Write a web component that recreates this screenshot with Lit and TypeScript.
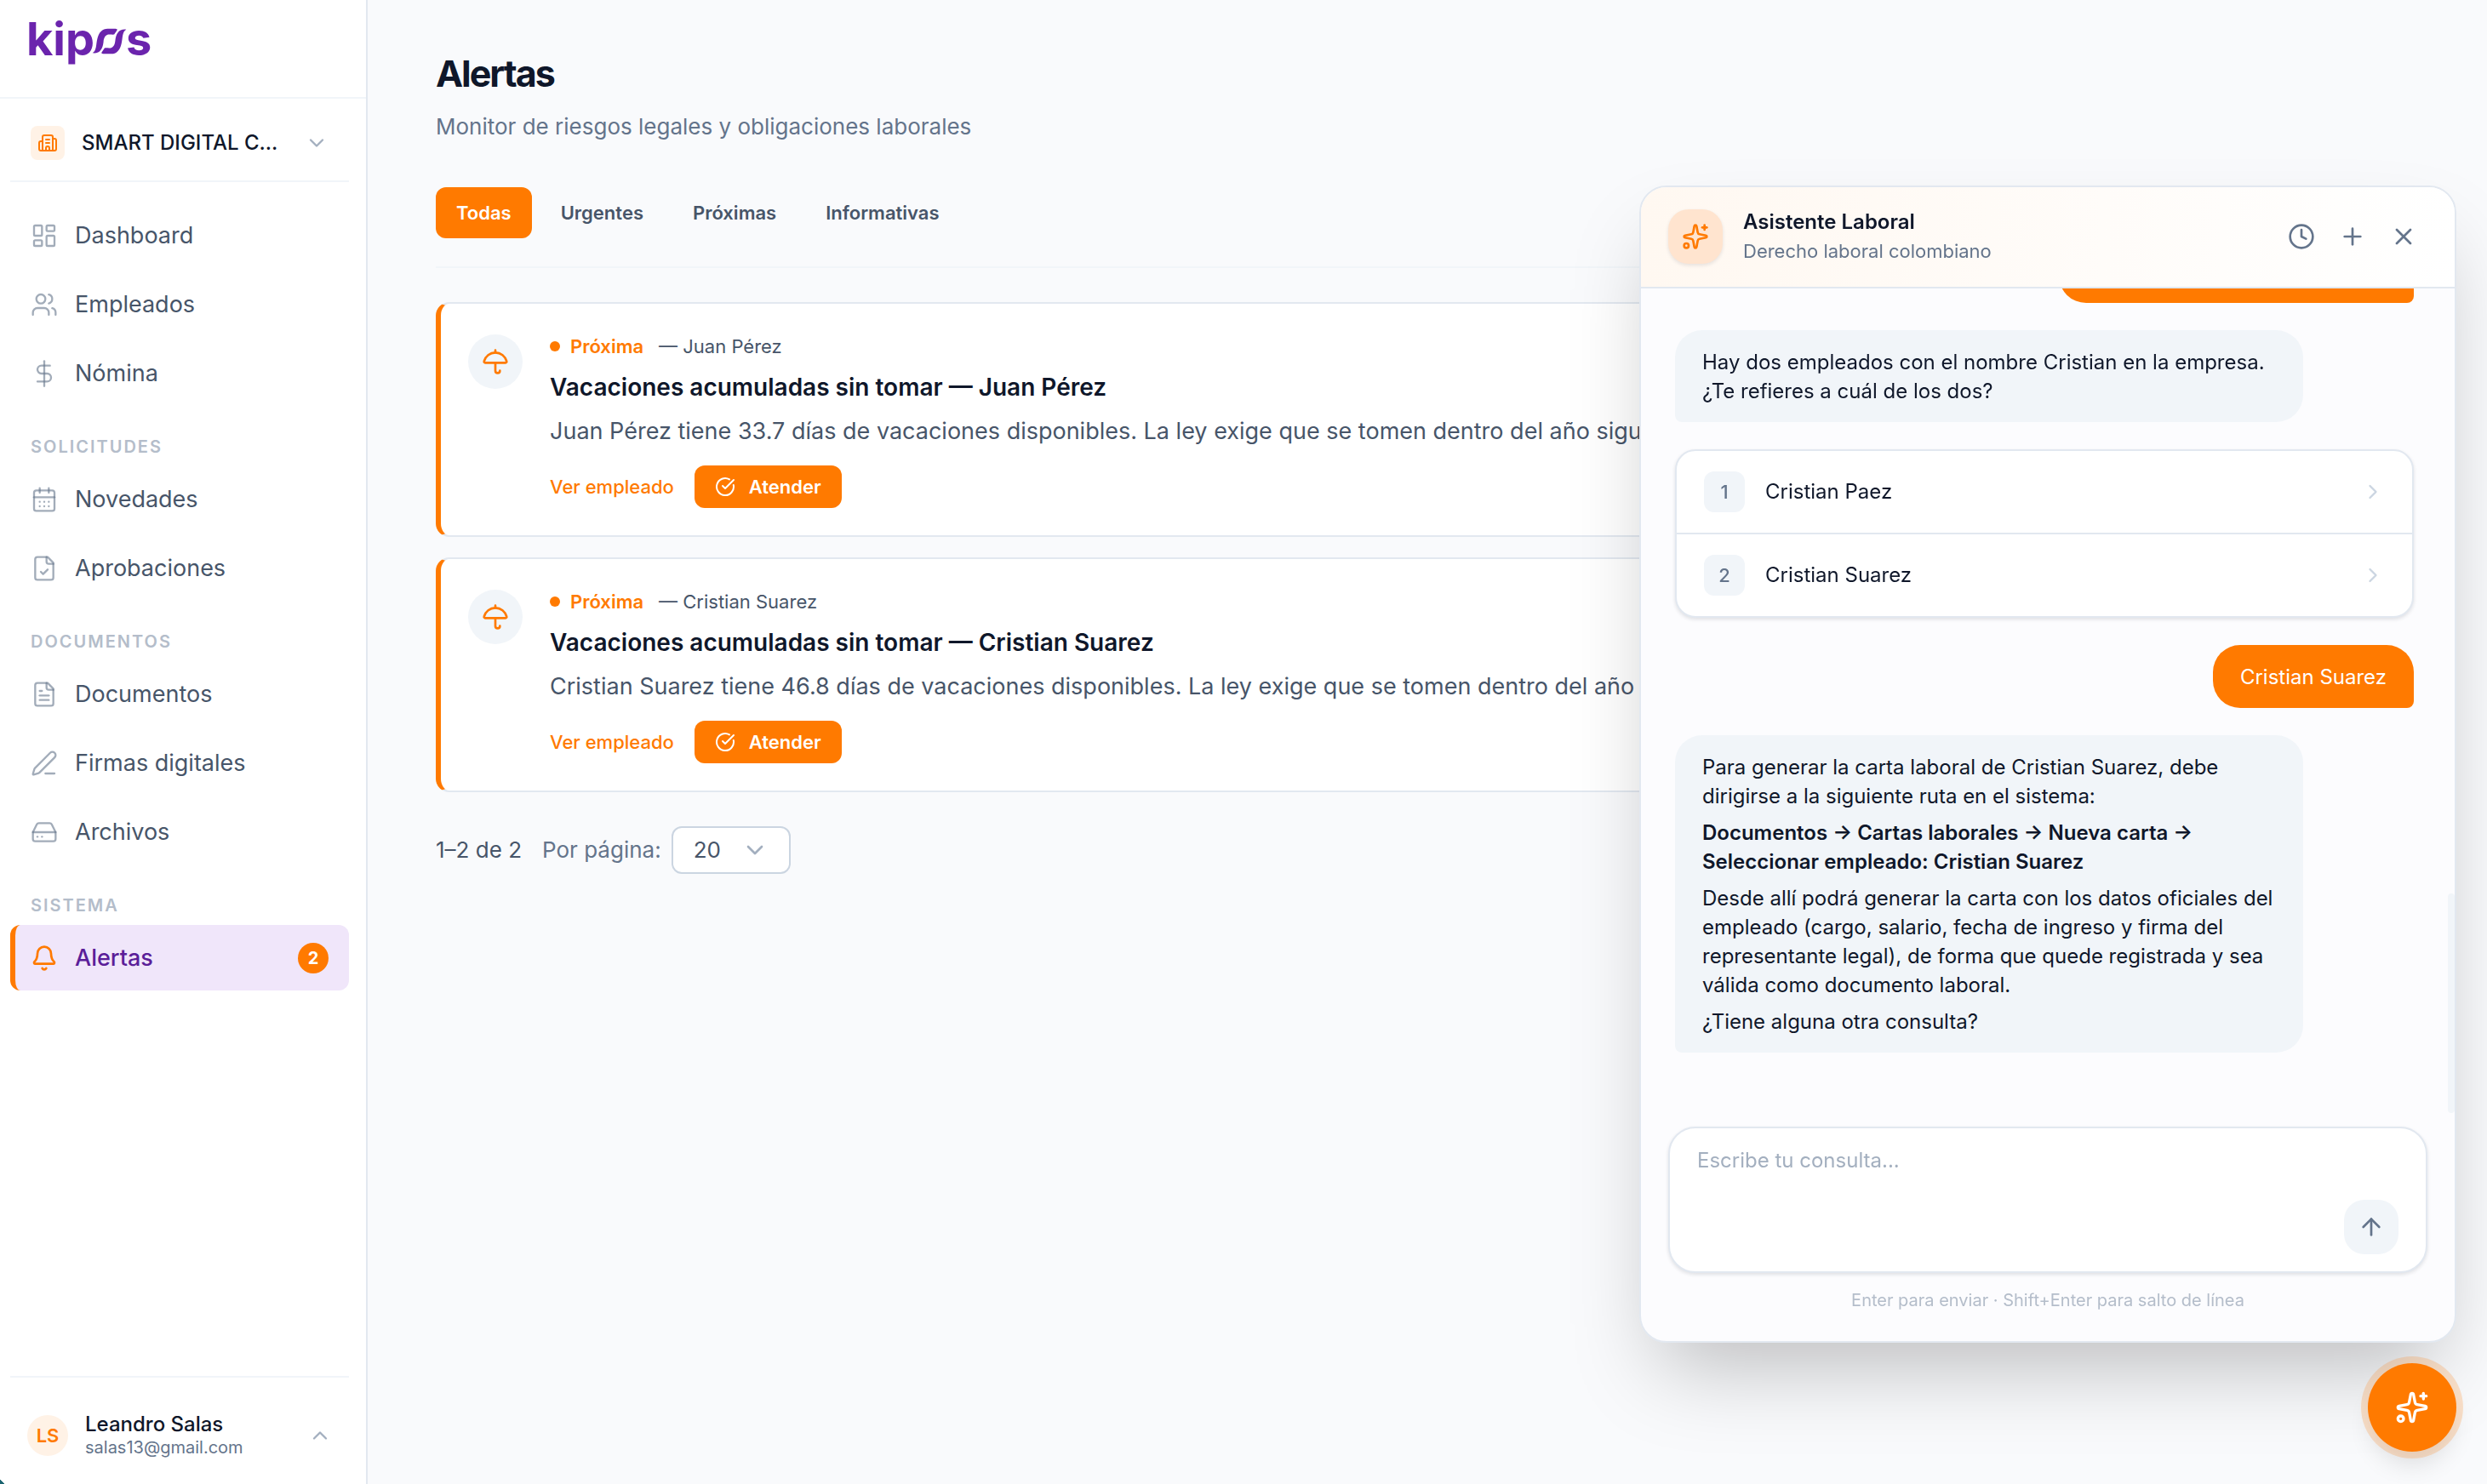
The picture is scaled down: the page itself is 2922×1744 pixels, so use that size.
import { LitElement, html, svg, css, nothing } from "lit";
import { customElement, property, state } from "lit/decorators.js";
import { classMap } from "lit/directives/class-map.js";

const ICONS: Record<string, unknown> = {
  dashboard: svg`<rect x="3" y="3" width="7" height="9" rx="1"/><rect x="14" y="3" width="7" height="5" rx="1"/><rect x="14" y="12" width="7" height="9" rx="1"/><rect x="3" y="16" width="7" height="5" rx="1"/>`,
  users: svg`<path d="M16 21v-2a4 4 0 0 0-4-4H6a4 4 0 0 0-4 4v2"/><circle cx="9" cy="7" r="4"/><path d="M22 21v-2a4 4 0 0 0-3-3.87"/><path d="M16 3.13a4 4 0 0 1 0 7.75"/>`,
  dollar: svg`<path d="M12 1v22"/><path d="M17 5H9.5a3.5 3.5 0 0 0 0 7h5a3.5 3.5 0 0 1 0 7H6"/>`,
  calendar: svg`<path d="M8 2v4"/><path d="M16 2v4"/><rect x="3" y="4" width="18" height="18" rx="2"/><path d="M3 10h18"/><path d="M8 14h.01"/><path d="M12 14h.01"/><path d="M16 14h.01"/><path d="M8 18h.01"/><path d="M12 18h.01"/><path d="M16 18h.01"/>`,
  fileCheck: svg`<path d="M15 2H6a2 2 0 0 0-2 2v16a2 2 0 0 0 2 2h12a2 2 0 0 0 2-2V7Z"/><path d="M14 2v4a2 2 0 0 0 2 2h4"/><path d="m9 15 2 2 4-4"/>`,
  fileText: svg`<path d="M15 2H6a2 2 0 0 0-2 2v16a2 2 0 0 0 2 2h12a2 2 0 0 0 2-2V7Z"/><path d="M14 2v4a2 2 0 0 0 2 2h4"/><path d="M10 9H8"/><path d="M16 13H8"/><path d="M16 17H8"/>`,
  pen: svg`<path d="M13 21h8"/><path d="M21.174 6.812a1 1 0 0 0-3.986-3.987L3.842 16.174a2 2 0 0 0-.5.83l-1.321 4.352a.5.5 0 0 0 .623.622l4.353-1.32a2 2 0 0 0 .83-.497z"/>`,
  drive: svg`<path d="M22 12H2"/><path d="M5.45 5.11 2 12v6a2 2 0 0 0 2 2h16a2 2 0 0 0 2-2v-6l-3.45-6.89A2 2 0 0 0 16.76 4H7.24a2 2 0 0 0-1.79 1.11z"/><path d="M6 16h.01"/><path d="M10 16h.01"/>`,
  bell: svg`<path d="M10.268 21a2 2 0 0 0 3.464 0"/><path d="M3.262 15.326A1 1 0 0 0 4 17h16a1 1 0 0 0 .74-1.673C19.41 13.956 18 12.499 18 8A6 6 0 0 0 6 8c0 4.499-1.411 5.956-2.738 7.326"/>`,
  building: svg`<path d="M10 12h4"/><path d="M10 8h4"/><path d="M14 21v-3a2 2 0 0 0-4 0v3"/><path d="M6 10H4a2 2 0 0 0-2 2v7a2 2 0 0 0 2 2h16a2 2 0 0 0 2-2V9a2 2 0 0 0-2-2h-2"/><path d="M6 21V5a2 2 0 0 1 2-2h8a2 2 0 0 1 2 2v16"/>`,
  umbrella: svg`<path d="M12 13v7a2 2 0 0 0 4 0"/><path d="M12 2v2"/><path d="M20.992 13a1 1 0 0 0 .97-1.274 10.284 10.284 0 0 0-19.923 0A1 1 0 0 0 3 13z"/>`,
  checkCircle: svg`<path d="M21.801 10A10 10 0 1 1 17 3.335"/><path d="m9 11 3 3L22 4"/>`,
  sparkles: svg`<path d="M11.017 2.814a1 1 0 0 1 1.966 0l1.051 5.558a2 2 0 0 0 1.594 1.594l5.558 1.051a1 1 0 0 1 0 1.966l-5.558 1.051a2 2 0 0 0-1.594 1.594l-1.051 5.558a1 1 0 0 1-1.966 0l-1.051-5.558a2 2 0 0 0-1.594-1.594l-5.558-1.051a1 1 0 0 1 0-1.966l5.558-1.051a2 2 0 0 0 1.594-1.594z"/><path d="M20 2v4"/><path d="M22 4h-4"/><circle cx="4" cy="20" r="2"/>`,
  clock: svg`<circle cx="12" cy="12" r="10"/><path d="M12 6v6l4 2"/>`,
  plus: svg`<path d="M5 12h14"/><path d="M12 5v14"/>`,
  close: svg`<path d="M18 6 6 18"/><path d="m6 6 12 12"/>`,
  arrowUp: svg`<path d="m5 12 7-7 7 7"/><path d="M12 19V5"/>`,
  chevronDown: svg`<path d="m6 9 6 6 6-6"/>`,
  chevronUp: svg`<path d="m18 15-6-6-6 6"/>`,
  chevronRight: svg`<path d="m9 18 6-6-6-6"/>`,
};

const icon = (name: string, size: number, stroke = 2) => html`<svg
  class="icon" width=${size} height=${size} viewBox="0 0 24 24" fill="none" stroke="currentColor"
  stroke-width=${stroke} stroke-linecap="round" stroke-linejoin="round" aria-hidden="true"
>${ICONS[name]}</svg>`;

const base = css`
  * { box-sizing: border-box; }
  h1, h2, h3, p, ul { margin: 0; padding: 0; }
  ul { list-style: none; }
  a { color: inherit; text-decoration: none; }
  button, select, textarea { font: inherit; color: inherit; border: 0; margin: 0; padding: 0; background: none; }
  button { cursor: pointer; }
  .icon { display: block; flex: none; }
`;

interface NavItem { label: string; icon: string; badge?: number; }
interface NavGroup { title?: string; items: NavItem[]; }

const NAV: NavGroup[] = [
  { items: [
    { label: "Dashboard", icon: "dashboard" },
    { label: "Empleados", icon: "users" },
    { label: "Nómina", icon: "dollar" },
  ] },
  { title: "Solicitudes", items: [
    { label: "Novedades", icon: "calendar" },
    { label: "Aprobaciones", icon: "fileCheck" },
  ] },
  { title: "Documentos", items: [
    { label: "Documentos", icon: "fileText" },
    { label: "Firmas digitales", icon: "pen" },
    { label: "Archivos", icon: "drive" },
  ] },
  { title: "Sistema", items: [{ label: "Alertas", icon: "bell", badge: 2 }] },
];

@customElement("app-sidebar")
class AppSidebar extends LitElement {
  @property() current = "Alertas";

  static styles = [base, css`
    :host {
      display: flex; flex-direction: column; flex: none; width: 432px; min-height: 100vh;
      background: linear-gradient(45deg, #1b6470 4px, #ffffff 4px); border-right: 2px solid #e2e8f0;
    }
    .brand { display: flex; height: 116px; padding: 16px 31px; border-bottom: 2px solid #f1f5f9; }
    .logo { display: flex; align-items: baseline; height: 60px; font-size: 54px; line-height: 60px; font-weight: 700; color: #6b24ad; }
    .logo-o { width: 41px; height: 33px; margin: 0 -1px -2px -3px; }
    .company { display: flex; align-items: center; gap: 20px; margin: 0 20px 0 12px; padding: 32px 24px 24px; border-bottom: 2px solid #f1f5f9; color: #0f172a; text-align: left; }
    .company-mark { display: grid; place-items: center; flex: none; width: 40px; height: 40px; border-radius: 8px; background: #fff2e6; color: #ff7a00; }
    .company-name { flex: 1; font-size: 24px; line-height: 40px; font-weight: 500; }
    .chevron { color: #a3afbf; }
    nav { display: flex; flex-direction: column; flex: 1; padding: 24px 20px 0 12px; }
    .group, ul { display: flex; flex-direction: column; gap: 4px; }
    .group + .group { margin-top: 4px; }
    .group-title { padding: 34px 24px 9px; font-size: 20px; line-height: 20px; font-weight: 600; letter-spacing: 2px; text-transform: uppercase; color: #b4bdca; }
    .item { display: flex; align-items: center; gap: 20px; height: 77px; padding: 0 24px 0 18px; border-left: 6px solid transparent; border-radius: 12px; font-size: 27px; line-height: 36px; color: #475569; }
    .item .icon { color: rgba(100, 116, 139, 0.6); }
    .item.active { border-left-color: #ff7a00; background: #f0e6fa; color: #5b1e99; font-weight: 500; }
    .item.active .icon { color: #ff7a00; }
    .label { flex: 1; }
    .badge { display: grid; place-items: center; width: 36px; height: 36px; border-radius: 50%; background: #ff7a00; color: #ffffff; font-size: 20px; line-height: 20px; font-weight: 700; }
    .account { display: flex; align-items: center; gap: 20px; margin: 0 20px 0 12px; padding: 41px 20px 30px; border-top: 2px solid #f1f5f9; text-align: left; }
    .avatar { display: grid; place-items: center; flex: none; width: 48px; height: 48px; border-radius: 50%; background: #fff2e6; color: #ff7a00; font-size: 22px; font-weight: 600; }
    .who { display: flex; flex-direction: column; flex: 1; }
    .name { font-size: 24px; line-height: 28px; font-weight: 500; color: #0f172a; }
    .mail { font-size: 20px; line-height: 26px; color: #64748b; }
  `];

  render() {
    return html`
      <div class="brand">
        <a class="logo" href="#" aria-label="kipos">kip<svg class="logo-o" viewBox="330 102 124 100" fill="currentColor" aria-hidden="true">
            <path d="M332 194C347 186 344 164 349 144C354 120 367 107 386 107H414Q422 107 419 113L409 128C403 129 395 127 388 128C376 131 372 142 371 155C368 180 358 197 332 194Z"/>
            <path transform="rotate(180 392 152)" d="M332 194C347 186 344 164 349 144C354 120 367 107 386 107H414Q422 107 419 113L409 128C403 129 395 127 388 128C376 131 372 142 371 155C368 180 358 197 332 194Z"/>
          </svg>s</a>
      </div>
      <button class="company" type="button">
        <span class="company-mark">${icon("building", 24)}</span>
        <span class="company-name">SMART DIGITAL C...</span>
        <span class="chevron">${icon("chevronDown", 28)}</span>
      </button>
      <nav aria-label="Principal">
        ${NAV.map((g) => html`
          <div class="group">
            ${g.title ? html`<h2 class="group-title">${g.title}</h2>` : nothing}
            <ul>
              ${g.items.map((i) => html`<li><a href="#" class=${classMap({ item: true, active: i.label === this.current })}>
                ${icon(i.icon, 32, i.label === this.current ? 2 : 1.75)}
                <span class="label">${i.label}</span>
                ${i.badge ? html`<span class="badge">${i.badge}</span>` : nothing}
              </a></li>`)}
            </ul>
          </div>`)}
      </nav>
      <button class="account" type="button">
        <span class="avatar">LS</span>
        <span class="who"><span class="name">Leandro Salas</span><span class="mail">salas13@gmail.com</span></span>
        <span class="chevron">${icon("chevronUp", 28)}</span>
      </button>`;
  }
}

@customElement("alert-card")
class AlertCard extends LitElement {
  @property() person = "";
  @property() days = "";

  static styles = [base, css`
    :host { display: block; }
    .card { display: flex; gap: 32px; padding: 36px 32px 32px; border: 2px solid #e2e8f0; border-left: 6px solid #ff7a00; border-radius: 16px; background: #ffffff; }
    .symbol { display: grid; place-items: center; flex: none; width: 64px; height: 64px; border-radius: 50%; background: #f1f5f9; color: #ff7a00; }
    .body { flex: 1; min-width: 0; }
    .meta { display: flex; align-items: center; font-size: 22px; line-height: 28px; color: #475569; }
    .dot { width: 12px; height: 12px; border-radius: 50%; background: #ff7a00; }
    .level { margin: 0 18px 0 12px; font-weight: 600; color: #ff7a00; }
    h3 { margin: 16px 0 14px; font-size: 28px; line-height: 36px; font-weight: 600; color: #0f172a; }
    .text { font-size: 27px; line-height: 40px; color: #475569; white-space: nowrap; overflow: hidden; text-overflow: ellipsis; }
    .actions { display: flex; align-items: center; gap: 24px; margin-top: 20px; font-size: 22px; line-height: 28px; color: #ff7a00; }
    .link { font-weight: 500; }
    .attend { display: flex; align-items: center; gap: 16px; height: 50px; padding: 0 24px; border-radius: 12px; background: #ff7a00; color: #ffffff; font-weight: 600; }
  `];

  render() {
    return html`<article class="card">
      <span class="symbol">${icon("umbrella", 32)}</span>
      <div class="body">
        <p class="meta"><span class="dot"></span><span class="level">Próxima</span><span>— ${this.person}</span></p>
        <h3>Vacaciones acumuladas sin tomar — ${this.person}</h3>
        <p class="text">${this.person} tiene ${this.days} días de vacaciones disponibles. La ley exige que se tomen dentro del año siguiente a su causación.</p>
        <div class="actions">
          <a class="link" href="#">Ver empleado</a>
          <button class="attend" type="button">${icon("checkCircle", 24)}Atender</button>
        </div>
      </div>
    </article>`;
  }
}

@customElement("chat-panel")
class ChatPanel extends LitElement {
  static styles = [base, css`
    :host {
      display: flex; flex-direction: column; overflow: hidden; border: 2px solid #e2e8f0; border-radius: 32px;
      background: #fcfcfe; box-shadow: 0 50px 100px -24px rgba(0, 0, 0, 0.25); color: #0f172a;
    }
    header { display: flex; align-items: center; gap: 24px; height: 119px; padding: 0 32px; border-bottom: 2px solid #e2e8f0; background: linear-gradient(90deg, #fff8f1, #ffffff); }
    .mark { display: grid; place-items: center; width: 64px; height: 64px; border-radius: 24px; background: #ffe4cf; color: #ff7a00; box-shadow: 0 2px 4px rgba(15, 23, 42, 0.1); }
    .heading { flex: 1; }
    h2 { font-size: 24px; line-height: 34px; font-weight: 600; }
    .sub { font-size: 22px; line-height: 34px; color: #64748b; }
    .tools { display: flex; gap: 4px; color: #64748b; }
    .tool { display: grid; place-items: center; width: 56px; height: 56px; }
    .scroll { position: relative; display: flex; flex-direction: column; justify-content: flex-end; flex: 1; min-height: 0; gap: 32px; padding: 0 48px 87px 40px; overflow: hidden; font-size: 24px; line-height: 34px; }
    .thumb { position: absolute; right: 0; bottom: 16px; width: 8px; height: 258px; border-radius: 4px; background: #f1f5f9; }
    .bubble { display: flex; flex-direction: column; flex: none; gap: 9px; max-width: 85%; padding: 21px 32px 19px; border-radius: 32px; }
    .bot { align-self: flex-start; border-bottom-left-radius: 8px; background: #f1f5f9; }
    .user { align-self: flex-end; border-bottom-right-radius: 8px; background: #ff7a00; color: #ffffff; }
    .earlier { width: 48%; height: 74px; }
    .bubble strong { font-weight: 600; }
    .options { flex: none; border: 2px solid #e2e8f0; border-radius: 24px; background: #ffffff; box-shadow: 0 2px 4px rgba(15, 23, 42, 0.12); }
    .options li + li { border-top: 2px solid #e2e8f0; }
    .option { display: flex; align-items: center; gap: 24px; width: 100%; height: 96px; padding: 0 32px; text-align: left; }
    .num { display: grid; place-items: center; width: 48px; height: 48px; border-radius: 12px; background: #f1f5f9; color: #64748b; font-size: 22px; line-height: 28px; font-weight: 500; }
    .option-name { flex: 1; }
    .option .icon { color: #cbd5e1; }
    .composer { display: flex; align-items: flex-end; margin: 0 32px; height: 172px; padding: 21px 32px 20px; border: 2px solid #e2e8f0; border-radius: 32px; background: #ffffff; box-shadow: 0 2px 4px rgba(15, 23, 42, 0.12); }
    textarea { flex: 1; align-self: stretch; resize: none; outline: 0; font-size: 24px; line-height: 34px; }
    textarea::placeholder { color: #a3afbf; opacity: 1; }
    .send { display: grid; place-items: center; width: 64px; height: 64px; border-radius: 24px; background: #f1f5f9; color: #64748b; }
    .hint { padding: 18px 32px 34px; font-size: 20px; line-height: 28px; text-align: center; color: #b4bdca; }
  `];

  render() {
    return html`
      <header>
        <span class="mark">${icon("sparkles", 32)}</span>
        <div class="heading"><h2>Asistente Laboral</h2><p class="sub">Derecho laboral colombiano</p></div>
        <div class="tools">
          <button class="tool" type="button" aria-label="Historial">${icon("clock", 32)}</button>
          <button class="tool" type="button" aria-label="Nueva conversación">${icon("plus", 32)}</button>
          <button class="tool" type="button" aria-label="Cerrar">${icon("close", 32)}</button>
        </div>
      </header>
      <div class="scroll">
        <div class="bubble user earlier"></div>
        <div class="bubble bot"><p>Hay dos empleados con el nombre Cristian en la empresa. ¿Te refieres a cuál de los dos?</p></div>
        <ul class="options">
          ${["Cristian Paez", "Cristian Suarez"].map((n, i) => html`<li><button class="option" type="button">
            <span class="num">${i + 1}</span><span class="option-name">${n}</span>${icon("chevronRight", 28)}
          </button></li>`)}
        </ul>
        <div class="bubble user"><p>Cristian Suarez</p></div>
        <div class="bubble bot">
          <p>Para generar la carta laboral de Cristian Suarez, debe dirigirse a la siguiente ruta en el sistema:</p>
          <p><strong>Documentos → Cartas laborales → Nueva carta → Seleccionar empleado: Cristian Suarez</strong></p>
          <p>Desde allí podrá generar la carta con los datos oficiales del empleado (cargo, salario, fecha de ingreso y firma del representante legal), de forma que quede registrada y sea válida como documento laboral.</p>
          <p>¿Tiene alguna otra consulta?</p>
        </div>
        <div class="thumb"></div>
      </div>
      <form class="composer" @submit=${(e: Event) => e.preventDefault()}>
        <textarea aria-label="Consulta" placeholder="Escribe tu consulta..."></textarea>
        <button class="send" type="submit" aria-label="Enviar">${icon("arrowUp", 32)}</button>
      </form>
      <p class="hint">Enter para enviar · Shift+Enter para salto de línea</p>`;
  }
}

@customElement("app-root")
class AppRoot extends LitElement {
  @state() private tab = "Todas";

  static styles = [base, css`
    :host { display: flex; min-height: 100vh; background: #f9fafc; color: #0f172a; font-family: Inter, "Liberation Sans", sans-serif; font-size: 24px; }
    main { flex: 1; min-width: 0; padding: 60px 80px; }
    h1 { font-size: 43px; line-height: 52px; font-weight: 700; letter-spacing: -2px; }
    .lead { margin-top: 20px; font-size: 26px; line-height: 34px; color: #64748b; }
    .tabs { display: flex; gap: 10px; margin-top: 54px; padding-bottom: 33px; border-bottom: 2px solid #f1f5f9; }
    .tab { height: 60px; padding: 0 24px; border-radius: 12px; font-size: 22px; line-height: 28px; font-weight: 600; color: #475569; }
    .tab.on { background: #ff7a00; color: #ffffff; }
    .cards { display: flex; flex-direction: column; gap: 24px; margin-top: 40px; }
    .pager { display: flex; align-items: center; margin-top: 40px; font-size: 26px; line-height: 34px; color: #475569; }
    .pager label { margin: 0 12px 0 24px; color: #64748b; }
    .picker { display: grid; align-items: center; width: 140px; height: 56px; border: 2px solid #cbd5e1; border-radius: 12px; background: #ffffff; }
    .picker select, .picker .icon { grid-area: 1 / 1; }
    .picker select { width: 100%; height: 100%; padding: 0 24px; appearance: none; }
    .picker .icon { justify-self: end; margin-right: 24px; color: #a3afbf; pointer-events: none; }
    chat-panel { position: fixed; right: 36px; bottom: 166px; width: 960px; max-width: calc(100vw - 72px); height: 78vh; }
    .fab { position: fixed; right: 36px; bottom: 38px; display: grid; place-items: center; width: 104px; height: 104px; border-radius: 50%; background: #ff7a00; color: #ffffff; box-shadow: 0 0 0 8px rgba(255, 122, 0, 0.2), 0 20px 30px -6px rgba(0, 0, 0, 0.12); }
  `];

  render() {
    return html`
      <app-sidebar current="Alertas"></app-sidebar>
      <main>
        <h1>Alertas</h1>
        <p class="lead">Monitor de riesgos legales y obligaciones laborales</p>
        <div class="tabs">
          ${["Todas", "Urgentes", "Próximas", "Informativas"].map((t) => html`<button type="button"
            class=${classMap({ tab: true, on: t === this.tab })} @click=${() => { this.tab = t; }}>${t}</button>`)}
        </div>
        <section class="cards" aria-label="Alertas">
          <alert-card person="Juan Pérez" days="33.7"></alert-card>
          <alert-card person="Cristian Suarez" days="46.8"></alert-card>
        </section>
        <div class="pager">
          <span>1–2 de 2</span>
          <label for="size">Por página:</label>
          <span class="picker"><select id="size"><option>20</option><option>50</option></select>${icon("chevronDown", 32)}</span>
        </div>
      </main>
      <chat-panel role="dialog" aria-label="Asistente Laboral"></chat-panel>
      <button class="fab" type="button" aria-label="Abrir asistente">${icon("sparkles", 40)}</button>`;
  }
}
